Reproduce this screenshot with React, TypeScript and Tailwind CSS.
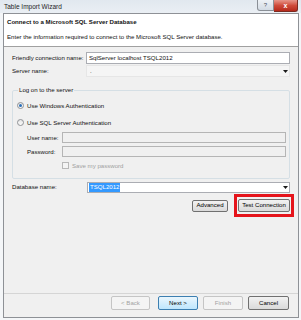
import React from "react";

function Arrow() {
  return (
    <svg width="5" height="3" viewBox="0 0 5 3" className="shrink-0">
      <path d="M0 0h5L2.5 3z" fill="#1a1a1a" />
    </svg>
  );
}

function Radio({ checked, label }: { checked?: boolean; label: string }) {
  return (
    <div className="flex items-center gap-[3px]">
      <div className="flex h-[7px] w-[7px] items-center justify-center rounded-full border border-[#8f9296] bg-gradient-to-b from-[#e6e6e6] to-[#fafafa]">
        {checked && <div className="h-[3px] w-[3px] rounded-full bg-[#2a6fb8]" />}
      </div>
      <span>{label}</span>
    </div>
  );
}

function WinButton({
  label,
  disabled,
  focused,
  className = "",
}: {
  label: string;
  disabled?: boolean;
  focused?: boolean;
  className?: string;
}) {
  const look = disabled
    ? "border-[#c5c5c5] bg-[#f4f4f4] text-[#a3a3a3]"
    : focused
      ? "border-[#3c7fb1] bg-gradient-to-b from-[#eaf6fd] to-[#bee6fd] text-black"
      : "border-[#707070] bg-gradient-to-b from-[#f2f2f2] to-[#dadada] text-black";
  return (
    <button className={`flex items-center justify-center rounded-[2px] border ${look} ${className}`}>
      {label}
    </button>
  );
}

export default function App() {
  return (
    <div className="flex h-[320px] w-[301px] flex-col overflow-hidden bg-[#f4f6f8] text-[6.1px] leading-none text-[#111] [font-family:'Liberation_Sans',Arial,sans-serif]">
      {/* title bar */}
      <div className="flex h-[13px] shrink-0 items-start justify-between bg-gradient-to-b from-[#e1e8ef] to-[#eaeff4] pl-[4px] pr-[3px]">
        <span className="mt-[4px] text-[6.5px] text-[#1e1e1e]">Table Import Wizard</span>
        <div className="flex">
          <div className="flex h-[11px] w-[17px] items-center justify-center rounded-bl-[3px] border border-t-0 border-[#8a8f96] bg-gradient-to-b from-[#eef2f6] to-[#d3dbe4] text-[6px] text-[#4a5360]">
            ?
          </div>
          <div className="flex h-[12px] w-[24px] items-center justify-center rounded-br-[3px] border border-t-0 border-l-0 border-[#7a2a20] bg-gradient-to-b from-[#e6958a] via-[#cf4a3a] to-[#b5281a] text-[7px] font-bold text-white">
            x
          </div>
        </div>
      </div>

      {/* client area */}
      <div className="ml-[3px] flex h-[305px] w-[296px] shrink-0 flex-col border border-[#8e9196] bg-[#f0f0f0]">
        {/* header */}
        <div className="flex h-[33px] shrink-0 flex-col border-b border-[#a0a0a0] bg-white pl-[3px]">
          <span className="mt-[5px] font-bold">Connect to a Microsoft SQL Server Database</span>
          <span className="mt-[9px]">Enter the information required to connect to the Microsoft SQL Server database.</span>
        </div>

        {/* form */}
        <div className="flex flex-col pl-[8px] pr-[8px]">
          <div className="mt-[5px] flex items-center">
            <span className="w-[74px]">Friendly connection name:</span>
            <div className="flex h-[12px] flex-1 items-center border border-[#abadb3] bg-white pl-[2px]">
              SqlServer localhost TSQL2012
            </div>
          </div>
          <div className="mt-[1px] flex items-center">
            <span className="w-[74px]">Server name:</span>
            <div className="flex h-[12px] flex-1 items-center justify-between border border-[#e6e6e6] bg-[#f5f5f5] pl-[3px] pr-[1px]">
              <span>.</span>
              <Arrow />
            </div>
          </div>

          <fieldset className="mt-[10px] flex h-[92px] flex-col rounded-[2px] border border-[#d5dfe5] px-[4px]">
            <legend className="ml-[1px] px-[1px]">Log on to the server</legend>
            <div className="mt-[9px]">
              <Radio checked label="Use Windows Authentication" />
            </div>
            <div className="mt-[10px]">
              <Radio label="Use SQL Server Authentication" />
            </div>
            <div className="mt-[6px] flex items-center pl-[10px]">
              <span className="w-[35px]">User name:</span>
              <div className="-mr-[1px] h-[11px] flex-1 border border-[#b5b5b5] bg-[#f0f0f0]" />
            </div>
            <div className="mt-[3px] flex items-center pl-[10px]">
              <span className="w-[35px]">Password:</span>
              <div className="-mr-[1px] h-[11px] flex-1 border border-[#b5b5b5] bg-[#f0f0f0]" />
            </div>
            <div className="mt-[5px] flex items-center gap-[3px] pl-[45px] text-[#a0a0a0]">
              <div className="h-[7px] w-[7px] border border-[#b8b8b8] bg-[#f4f4f4]" />
              <span>Save my password</span>
            </div>
          </fieldset>

          <div className="mt-[3px] flex items-center">
            <span className="w-[75px]">Database name:</span>
            <div className="flex h-[11px] flex-1 items-center justify-between border border-[#abadb3] bg-white pl-[1px] pr-[1px]">
              <span className="bg-[#3399ff] px-[1px] py-[1px] text-white">TSQL2012</span>
              <Arrow />
            </div>
          </div>

          <div className="mt-[1px] flex items-center justify-end">
            <WinButton label="Advanced" className="h-[12px] w-[36px]" />
            <div className="-mr-[4px] ml-[6px] border-[3px] border-[#e5141b] px-[1px] py-[2px]">
              <WinButton label="Test Connection" className="h-[13px] w-[52px]" />
            </div>
          </div>
        </div>

        <div className="flex-1" />

        {/* footer */}
        <div className="flex shrink-0 justify-end gap-[5px] border-t border-[#d5d5d5] pb-[7px] pr-[9px] pt-[2px]">
          <WinButton label="< Back" disabled className="mr-[3px] h-[14px] w-[39px]" />
          <WinButton label="Next >" focused className="h-[14px] w-[40px]" />
          <WinButton label="Finish" disabled className="h-[14px] w-[40px]" />
          <WinButton label="Cancel" className="h-[14px] w-[41px]" />
        </div>
      </div>
    </div>
  );
}
